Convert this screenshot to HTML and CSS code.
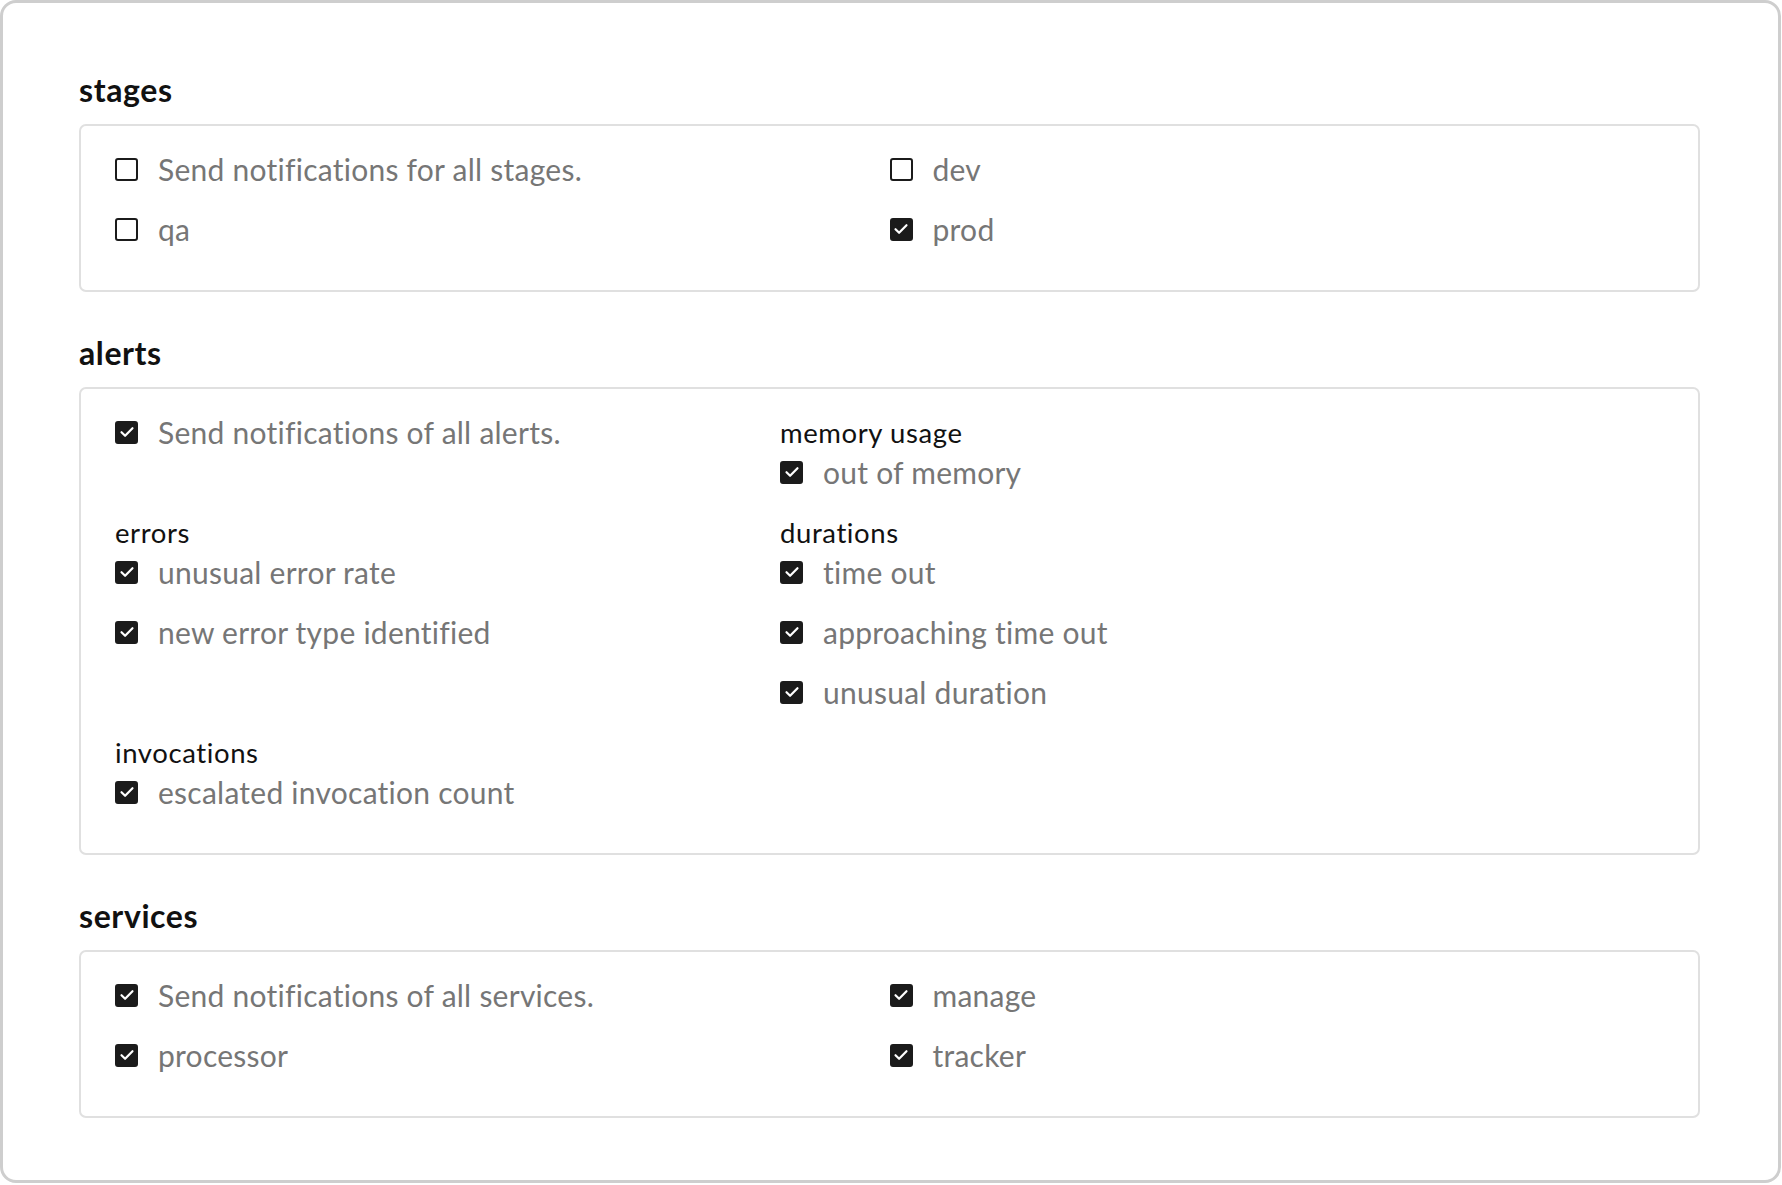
FILE: index.html
```html
<!DOCTYPE html>
<html lang="en">
<head>
<meta charset="utf-8">
<title>Notification settings</title>
<link rel="stylesheet" href="styles.css">
</head>
<body>
<div class="card">
  <section class="section">
    <h2 class="section-title">stages</h2>
    <div class="box">
      <div class="grid two">
        <div class="col">
          <label class="item"><span class="cb"></span><span class="label">Send notifications for all stages.</span></label>
          <label class="item"><span class="cb"></span><span class="label">qa</span></label>
        </div>
        <div class="col">
          <label class="item"><span class="cb"></span><span class="label">dev</span></label>
          <label class="item"><span class="cb on"><svg viewBox="0 0 22 22"><path d="M5.5 11.2l3.6 3.6 7.4-7.6"/></svg></span><span class="label">prod</span></label>
        </div>
      </div>
    </div>
  </section>

  <section class="section">
    <h2 class="section-title">alerts</h2>
    <div class="box">
      <div class="grid alerts">
        <div class="group">
          <label class="item"><span class="cb on"><svg viewBox="0 0 22 22"><path d="M5.5 11.2l3.6 3.6 7.4-7.6"/></svg></span><span class="label">Send notifications of all alerts.</span></label>
        </div>
        <div class="group">
          <h3 class="group-title">memory usage</h3>
          <label class="item"><span class="cb on"><svg viewBox="0 0 22 22"><path d="M5.5 11.2l3.6 3.6 7.4-7.6"/></svg></span><span class="label">out of memory</span></label>
        </div>
        <div class="group">
          <h3 class="group-title">errors</h3>
          <label class="item"><span class="cb on"><svg viewBox="0 0 22 22"><path d="M5.5 11.2l3.6 3.6 7.4-7.6"/></svg></span><span class="label">unusual error rate</span></label>
          <label class="item"><span class="cb on"><svg viewBox="0 0 22 22"><path d="M5.5 11.2l3.6 3.6 7.4-7.6"/></svg></span><span class="label">new error type identified</span></label>
        </div>
        <div class="group">
          <h3 class="group-title">durations</h3>
          <label class="item"><span class="cb on"><svg viewBox="0 0 22 22"><path d="M5.5 11.2l3.6 3.6 7.4-7.6"/></svg></span><span class="label">time out</span></label>
          <label class="item"><span class="cb on"><svg viewBox="0 0 22 22"><path d="M5.5 11.2l3.6 3.6 7.4-7.6"/></svg></span><span class="label">approaching time out</span></label>
          <label class="item"><span class="cb on"><svg viewBox="0 0 22 22"><path d="M5.5 11.2l3.6 3.6 7.4-7.6"/></svg></span><span class="label">unusual duration</span></label>
        </div>
        <div class="group">
          <h3 class="group-title">invocations</h3>
          <label class="item"><span class="cb on"><svg viewBox="0 0 22 22"><path d="M5.5 11.2l3.6 3.6 7.4-7.6"/></svg></span><span class="label">escalated invocation count</span></label>
        </div>
      </div>
    </div>
  </section>

  <section class="section">
    <h2 class="section-title">services</h2>
    <div class="box">
      <div class="grid two">
        <div class="col">
          <label class="item"><span class="cb on"><svg viewBox="0 0 22 22"><path d="M5.5 11.2l3.6 3.6 7.4-7.6"/></svg></span><span class="label">Send notifications of all services.</span></label>
          <label class="item"><span class="cb on"><svg viewBox="0 0 22 22"><path d="M5.5 11.2l3.6 3.6 7.4-7.6"/></svg></span><span class="label">processor</span></label>
        </div>
        <div class="col">
          <label class="item"><span class="cb on"><svg viewBox="0 0 22 22"><path d="M5.5 11.2l3.6 3.6 7.4-7.6"/></svg></span><span class="label">manage</span></label>
          <label class="item"><span class="cb on"><svg viewBox="0 0 22 22"><path d="M5.5 11.2l3.6 3.6 7.4-7.6"/></svg></span><span class="label">tracker</span></label>
        </div>
      </div>
    </div>
  </section>
</div>
</body>
</html>
```

FILE: styles.css
```css
* { box-sizing: border-box; }

html, body {
  margin: 0;
  padding: 0;
  background: #ffffff;
}

body {
  font-family: Lato, "Open Sans", "Noto Sans", sans-serif;
  font-variant-ligatures: none;
  color: #111111;
}

.card {
  width: 1781px;
  height: 1183px;
  border: 3px solid #cecece;
  border-radius: 16px;
  background: #ffffff;
  padding: 70px 78px 0 76px;
}

.section + .section {
  margin-top: 44px;
}

.section-title {
  margin: 0 0 17px 0;
  font-size: 32px;
  line-height: 34px;
  font-weight: 700;
  letter-spacing: 0.6px;
  color: #111111;
}

.box {
  border: 2px solid #e0e0e0;
  border-radius: 7px;
  padding: 21px 34px 23px 34px;
}

.grid {
  display: grid;
}

.grid.two {
  grid-template-columns: 1fr 1fr;
}

.grid.alerts {
  grid-template-columns: 665px 1fr;
}

.group-title {
  margin: 0;
  padding-top: 5px;
  font-size: 27.5px;
  line-height: 35px;
  font-weight: 400;
  letter-spacing: 0.6px;
  color: #111111;
}

.item {
  display: flex;
  align-items: center;
  height: 44px;
  margin-bottom: 16px;
}

.cb {
  flex: none;
  width: 23px;
  height: 23px;
  border: 2px solid #1b1b1b;
  border-radius: 3px;
  background: #ffffff;
  margin-right: 20px;
  display: flex;
  align-items: center;
  justify-content: center;
}

.cb.on {
  background: #1b1b1b;
}

.cb svg {
  width: 22px;
  height: 22px;
  flex: none;
}

.cb svg path {
  fill: none;
  stroke: #ffffff;
  stroke-width: 2.2;
  stroke-linecap: round;
  stroke-linejoin: round;
}

.label {
  font-size: 30px;
  line-height: 44px;
  letter-spacing: 0.25px;
  color: #767676;
  white-space: nowrap;
}
```
